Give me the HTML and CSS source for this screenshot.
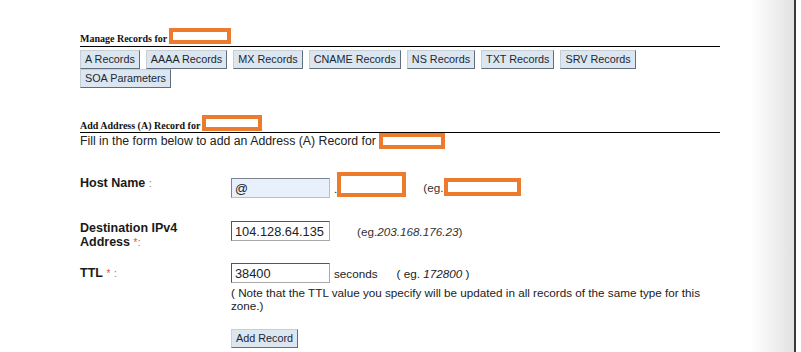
FILE: index.html
```
<!DOCTYPE html>
<html>
<head>
<meta charset="utf-8">
<link rel="stylesheet" href="styles.css">
</head>
<body>
<div class="page">
  <div class="sec-head head-manage">
    <span class="h">Manage Records for</span><span class="redact r-head1"></span>
  </div>
  <div class="tabs">
    <button class="btn">A Records</button>
    <button class="btn">AAAA Records</button>
    <button class="btn">MX Records</button>
    <button class="btn">CNAME Records</button>
    <button class="btn">NS Records</button>
    <button class="btn">TXT Records</button>
    <button class="btn">SRV Records</button>
    <button class="btn">SOA Parameters</button>
  </div>

  <div class="sec-head head-add">
    <span class="h">Add Address (A) Record for</span><span class="redact r-head2"></span>
  </div>
  <div class="intro">Fill in the form below to add an Address (A) Record for <span class="redact r-intro"></span></div>

  <div class="form">
    <div class="row row-host">
      <div class="label"><b>Host Name</b> <span class="colon">:</span></div>
      <div class="field">
        <input class="inp inp-host" type="text" value="@">
        <span class="dot">.</span><span class="redact r-domain"></span>
        <span class="eg">(eg.</span><span class="redact r-eg"></span>
      </div>
    </div>
    <div class="row row-ip">
      <div class="label"><b>Destination IPv4<br>Address</b> <span class="req">*</span><span class="colon">:</span></div>
      <div class="field">
        <input class="inp inp-ip" type="text" value="104.128.64.135">
        <span class="eg eg-ip">(eg.<i>203.168.176.23</i>)</span>
      </div>
    </div>
    <div class="row row-ttl">
      <div class="label"><b class="ttl">TTL</b> <span class="req">*</span> <span class="colon">:</span></div>
      <div class="field-col">
        <div class="ttl-line">
          <input class="inp inp-ttl" type="text" value="38400">
          <span class="sec">seconds</span>
          <span class="eg-ttl">( eg. <i>172800</i> )</span>
        </div>
        <div class="note">( Note that the TTL value you specify will be updated in all records of the same type for this zone.)</div>
        <button class="btn add">Add Record</button>
      </div>
    </div>
  </div>
</div>
</body>
</html>
```

FILE: styles.css
```
html {
  background: linear-gradient(to right, #ffffff 0px, #ffffff 750px, #e2e2e2 794px, #3a3a3a 794px, #3a3a3a 796px, #ffffff 796px);
  min-height: 100%;
}
body {
  margin: 0;
  font-family: "Liberation Sans", Arial, sans-serif;
  font-size: 11.7px;
  color: #222;
}
.page {
  padding-left: 80px;
  width: 640px;
}
.sec-head {
  display: flex;
  align-items: flex-end;
  border-bottom: 1px solid #000;
  padding-bottom: 1px;
}
.sec-head .h {
  font-family: "Liberation Serif", "Times New Roman", serif;
  font-weight: bold;
  font-size: 10px;
  line-height: 11px;
  color: #111;
}
.head-manage {
  margin-top: 28px;
  padding-bottom: 2px;
}
.head-add {
  margin-top: 27px;
}
.redact {
  display: inline-block;
  box-sizing: border-box;
  border: 4px solid #ec7b2d;
  background: #fff;
  vertical-align: top;
}
.r-head1 { width: 62px; height: 16px; margin-left: 2px; }
.r-head2 { width: 60px; height: 16px; margin-left: 2px; }
.r-intro { width: 66px; height: 16px; margin-left: 0; }
.r-domain { width: 69px; height: 25px; }
.r-eg { width: 77px; height: 18px; margin-left: 1px; }

.tabs {
  display: flex;
  flex-wrap: wrap;
  column-gap: 6px;
  row-gap: 0;
  margin-top: 3px;
  width: 640px;
}
.btn {
  font-family: "Liberation Sans", Arial, sans-serif;
  font-size: 10.8px;
  color: #1b2633;
  background: #dbe6f1;
  border: 1px solid;
  border-color: #c6ced6 #5f6f80 #5f6f80 #c6ced6;
  height: 19px;
  padding: 0 4px;
  margin: 0;
  line-height: 17px;
}
.intro {
  font-size: 12.3px;
  line-height: 16px;
  height: 16px;
  color: #222;
}

.form {
  margin-top: 24px;
}
.row {
  display: flex;
}
.label {
  width: 151px;
  flex: none;
  font-size: 12.5px;
  line-height: 14px;
  color: #222;
}
.label b { color: #1a1a1a; }
.colon { color: #888; font-size: 11.5px; }
.req { color: #e04a4a; font-size: 10px; }
.field {
  display: flex;
  align-items: flex-start;
}
.inp {
  box-sizing: border-box;
  height: 20px;
  width: 99px;
  margin: 0;
  padding: 0 3px;
  font-family: "Liberation Sans", Arial, sans-serif;
  font-size: 12.8px;
  color: #222;
  border: 1px solid;
  border-color: #555 #aaa #aaa #555;
  background: #fff;
  outline: none;
}
.row-host { height: 48px; }
.row-host .label { padding-top: 3px; }
.row-host .field { padding-top: 5px; }
.inp-host { background: #e8f0fc; border-color: #7a8494 #b6bec8 #b6bec8 #7a8494; }
.dot { margin-left: 4px; line-height: 22px; }
.row-host .r-domain { margin-top: -6px; }
.eg { margin-left: 17px; line-height: 20px; color: #333; }
.row-host .eg { margin-left: 17px; }

.row-ip { height: 42px; }
.eg-ip { margin-left: 27px; line-height: 22px; }
.eg i { font-style: italic; }

.row-ttl .label { padding-top: 3px; }
.field-col {
  display: flex;
  flex-direction: column;
  align-items: flex-start;
}
.ttl-line { display: flex; align-items: center; height: 20px; }
.sec { margin-left: 4px; }
.eg-ttl { margin-left: 19px; }
.note {
  width: 480px;
  line-height: 13px;
  margin-top: 3px;
}
.btn.add { margin-top: 17px; height: 19px; }
```
